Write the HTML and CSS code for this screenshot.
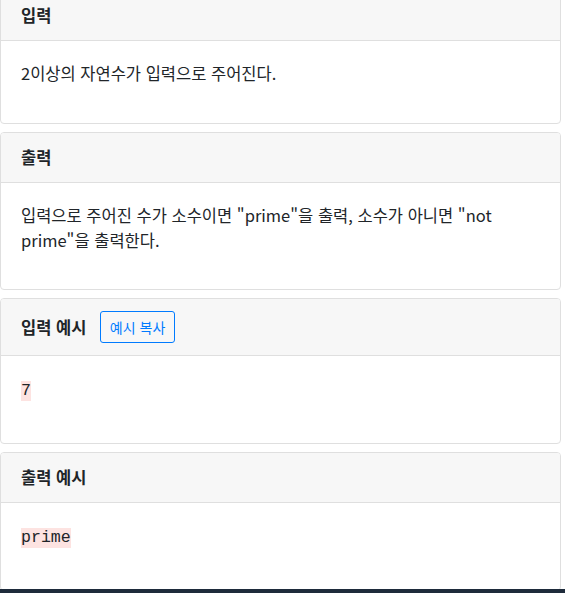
FILE: index.html
```html
<!DOCTYPE html>
<html lang="ko">
<head>
<meta charset="utf-8">
<link rel="stylesheet" href="styles.css">
</head>
<body>
<main class="page">
  <section class="card first">
    <div class="card-header">입력</div>
    <div class="card-body"><p>2이상의 자연수가 입력으로 주어진다.</p></div>
  </section>
  <section class="card">
    <div class="card-header">출력</div>
    <div class="card-body"><p>입력으로 주어진 수가 소수이면 "prime"을 출력, 소수가 아니면 "not prime"을 출력한다.</p></div>
  </section>
  <section class="card">
    <div class="card-header"><span>입력 예시</span><button class="btn-copy">예시 복사</button></div>
    <div class="card-body"><pre class="sample"><code>7</code></pre></div>
  </section>
  <section class="card">
    <div class="card-header">출력 예시</div>
    <div class="card-body"><pre class="sample"><code>prime</code></pre></div>
  </section>
</main>
<footer class="footer"></footer>
</body>
</html>
```
FILE: styles.css
```css
html, body {
  margin: 0;
  padding: 0;
  height: 593px;
  overflow: hidden;
}
body {
  font-family: "Noto Sans CJK KR", "Noto Sans", sans-serif;
  font-size: 16.5px;
  line-height: 25px;
  color: #212529;
  background: #fff;
  position: relative;
}
.page {
  width: 561px;
  display: flex;
  flex-direction: column;
  gap: 8px;
}
.card {
  border: 1px solid #dfdfdf;
  border-radius: 4px;
  background: #fff;
  overflow: hidden;
}
.card.first {
  margin-top: -10px;
}
.card-header {
  background: #f7f7f7;
  border-bottom: 1px solid #dfdfdf;
  padding: 12px 20px;
  font-weight: 700;
  display: flex;
  align-items: center;
  gap: 14px;
}
.card-body {
  padding: 20px;
}
.card-body p {
  margin: 0 0 16.5px;
}
.btn-copy {
  font-family: "Noto Sans CJK KR", "Noto Sans", sans-serif;
  font-size: 14px;
  line-height: 22px;
  padding: 4px 8.5px;
  color: #007bff;
  background: transparent;
  border: 1px solid #007bff;
  border-radius: 3px;
  font-weight: 400;
}
.sample {
  margin: 0 0 17px;
  font-family: "Liberation Mono", "DejaVu Sans Mono", monospace;
  font-size: 16.6px;
  line-height: 30px;
  color: #212529;
}
.sample code {
  font-family: inherit;
  background: #fde3e1;
  line-height: 20px;
  display: inline-block;
  vertical-align: middle;
}
.footer {
  position: absolute;
  left: 0;
  right: 0;
  top: 589px;
  height: 10px;
  background: #1e2b3b;
}
```
